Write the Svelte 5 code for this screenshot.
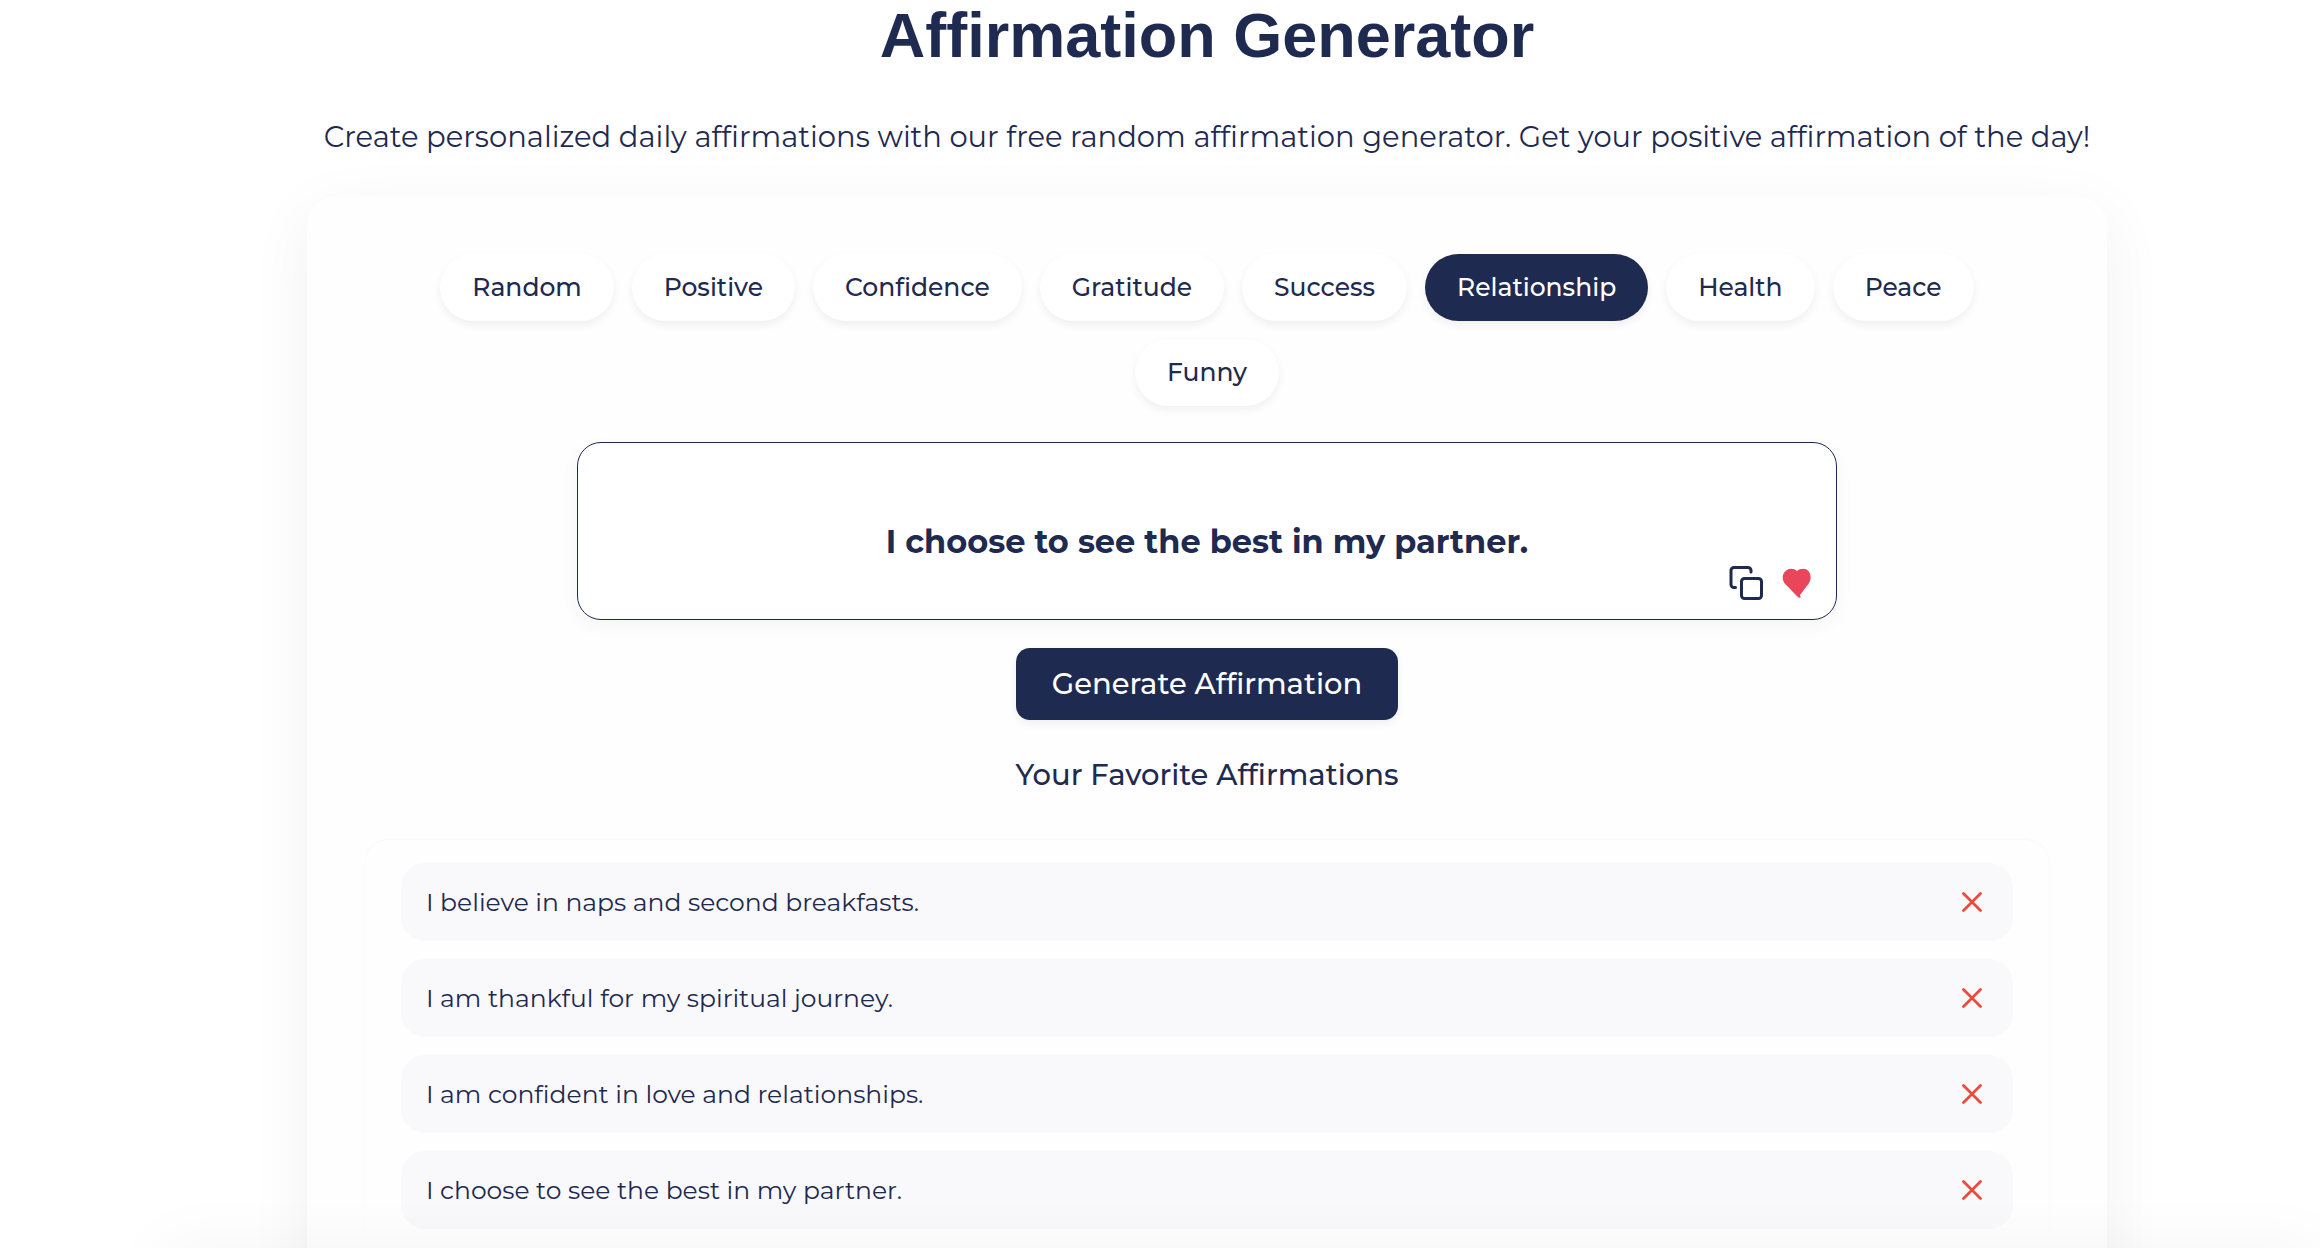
<script>
	let categories = [
		'Random',
		'Positive',
		'Confidence',
		'Gratitude',
		'Success',
		'Relationship',
		'Health',
		'Peace',
		'Funny'
	];

	let selected = $state('Relationship');
	let affirmation = 'I choose to see the best in my partner.';

	let favorites = $state([
		'I believe in naps and second breakfasts.',
		'I am thankful for my spiritual journey.',
		'I am confident in love and relationships.',
		'I choose to see the best in my partner.'
	]);

	let isFavorite = $derived(favorites.includes(affirmation));

	function toggleFavorite() {
		if (isFavorite) {
			remove(affirmation);
		} else {
			favorites.push(affirmation);
		}
	}

	function remove(text) {
		favorites = favorites.filter((item) => item !== text);
	}
</script>

<main class="page">
	<header>
		<h1>Affirmation Generator</h1>
		<p class="intro">
			Create personalized daily affirmations with our free random affirmation generator. Get your
			positive affirmation of the day!
		</p>
	</header>

	<section class="card">
		<div class="categories">
			{#each categories as category (category)}
				<button
					class="chip"
					class:active={selected === category}
					onclick={() => (selected = category)}
				>
					{category}
				</button>
			{/each}
		</div>

		<div class="affirmation">
			<p>{affirmation}</p>
			<div class="actions">
				<button class="icon" aria-label="Copy">
					<svg width="36" height="36" viewBox="0 0 36 36" fill="none" stroke="currentColor" stroke-width="3" stroke-linecap="round" stroke-linejoin="round">
						<rect x="13.5" y="13.5" width="20" height="20" rx="3" />
						<path d="M7.5 22.5H6a3 3 0 0 1-3-3V5.5a3 3 0 0 1 3-3h14a3 3 0 0 1 3 3V7" />
					</svg>
				</button>
				<button class="icon heart" class:empty={!isFavorite} aria-label="Favorite" onclick={toggleFavorite}>
					<svg width="30" height="30" viewBox="0 0 30 30">
						<path d="M15 3.2C12.5.4 8 .2 4.5 2.2 1.500 4 .3 7.500.8 11c.4 3 2.2 5 4.400 7.100l10.400 10.600c.9.900 2 1.300 2.700.8.6-.6.200-1.500-.5-2.300l7-9.100c2-2.200 3.500-4.700 3.800-7.600.3-3.500-.9-7-3.900-9C22 .3 17.500.4 15 3.200z" />
					</svg>
				</button>
			</div>
		</div>

		<button class="generate">Generate Affirmation</button>

		<h2>Your Favorite Affirmations</h2>

		<ul class="favorites">
			{#each favorites as favorite (favorite)}
				<li>
					<span>{favorite}</span>
					<button class="icon remove" aria-label="Remove" onclick={() => remove(favorite)}>
						<svg width="20" height="20" viewBox="0 0 20 20" fill="none" stroke="currentColor" stroke-width="2.8" stroke-linecap="round">
							<path d="M1.5 1.5l17 17M18.5 1.5l-17 17" />
						</svg>
					</button>
				</li>
			{/each}
		</ul>
	</section>
</main>

<div class="bottom-bar"></div>

<style>
	:global(body) {
		margin: 0;
		background: #fff;
	}

	.page {
		box-sizing: border-box;
		padding-left: 94px;
		color: #1f2a50;
		font-family: Montserrat, Inter, sans-serif;
		text-align: center;
		/* the page is cut at the fold */
		height: 100vh;
		overflow: hidden;
	}

	h1 {
		margin: 0;
		font-family: 'Liberation Sans', Arial, sans-serif;
		font-size: 63px;
		line-height: 70px;
	}

	.intro {
		margin: 46px 0 0;
		font-size: 29px;
		line-height: 42px;
	}

	.card {
		box-sizing: border-box;
		display: flex;
		flex-direction: column;
		align-items: center;
		max-width: 1800px;
		margin: 38px auto 0;
		padding: 58px;
		border-radius: 30px;
		background: #fefefe;
		box-shadow: 0 16px 64px rgba(0, 0, 0, 0.06);
	}

	button {
		border: none;
		color: inherit;
		font-family: inherit;
		cursor: pointer;
	}

	.categories {
		display: flex;
		flex-wrap: wrap;
		justify-content: center;
		gap: 18px;
		max-width: 1620px;
	}

	.chip {
		height: 67px;
		padding: 0 32px 2px;
		border-radius: 36px;
		background: #fff;
		box-shadow: 0 4px 8px rgba(0, 0, 0, 0.06);
		font-size: 25px;
		font-weight: 500;
	}

	.chip.active {
		background: #1f2a50;
		color: #fff;
	}

	.affirmation {
		box-sizing: border-box;
		position: relative;
		width: 100%;
		max-width: 1260px;
		margin-top: 36px;
		padding: 81px 48px 59px;
		border: 1px solid #1f2a50;
		border-radius: 24px;
		background: #fff;
		box-shadow: 0 6px 20px rgba(0, 0, 0, 0.04);
	}

	.affirmation p {
		margin: 0;
		font-size: 32px;
		font-weight: 700;
		line-height: 36px;
	}

	.actions {
		position: absolute;
		right: 24px;
		bottom: 18px;
		display: flex;
		align-items: center;
		gap: 18px;
	}

	.icon {
		display: flex;
		padding: 0;
		background: none;
	}

	.heart {
		color: #e9455b;
		fill: currentColor;
	}

	.heart.empty {
		fill: none;
		stroke: currentColor;
	}

	.generate {
		height: 72px;
		margin-top: 28px;
		padding: 0 36px 2px;
		border-radius: 14px;
		background: #1f2a50;
		box-shadow: 0 4px 8px rgba(0, 0, 0, 0.06);
		color: #fff;
		font-size: 29px;
		font-weight: 500;
	}

	h2 {
		margin: 36px 0 0;
		font-size: 29px;
		font-weight: 500;
		line-height: 38px;
	}

	.favorites {
		box-sizing: border-box;
		display: flex;
		flex-direction: column;
		gap: 18px;
		width: 100%;
		margin: 46px 0 0;
		padding: 23px 36px;
		border-radius: 24px;
		list-style: none;
		background: #fefefe;
		box-shadow: 0 -1px 2px rgba(0, 0, 0, 0.03);
	}

	.favorites li {
		display: flex;
		align-items: center;
		justify-content: space-between;
		height: 78px;
		padding: 0 31px 0 25px;
		border-radius: 24px;
		background: #f9f9fc;
		font-size: 25px;
	}

	.remove {
		color: #e94b3c;
	}

	/* sits just under the fold, only its shadow rises into view */
	.bottom-bar {
		position: fixed;
		right: 0;
		bottom: -40px;
		left: 160px;
		height: 40px;
		box-shadow: 0 0 64px rgba(0, 0, 0, 0.05);
	}
</style>
